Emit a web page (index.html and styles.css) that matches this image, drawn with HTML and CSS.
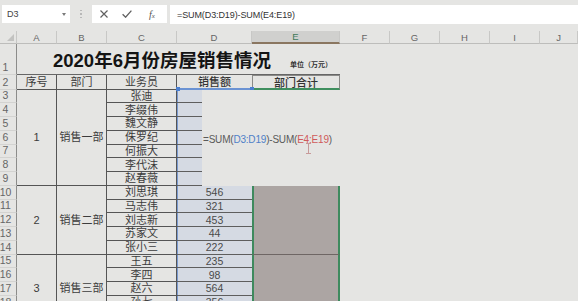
FILE: index.html
```html
<!DOCTYPE html>
<html lang="zh">
<head>
<meta charset="utf-8">
<title>2020年6月份房屋销售情况</title>
<link rel="stylesheet" href="styles.css">
</head>
<body>
<div class="topbar">
  <div class="namebox"><span>D3</span><span class="nb-arrow"></span></div>
  <div class="grip"><i></i><i></i><i></i></div>
  <div class="fxbox">
    <svg class="ic-x" width="8" height="8" viewBox="0 0 8 8"><path d="M0.5 0.5 L7.5 7.5 M7.5 0.5 L0.5 7.5" stroke="#606060" stroke-width="1.2" fill="none"/></svg>
    <svg class="ic-ok" width="10" height="8" viewBox="0 0 10 8"><path d="M0.6 4.2 L3.6 7.2 L9.4 0.6" stroke="#606060" stroke-width="1.3" fill="none"/></svg>
    <span class="fx">f<span class="fx-x">x</span></span>
  </div>
  <div class="formula">=SUM(D3:D19)-SUM(E4:E19)</div>
</div>

<div class="sheet">
  <div class="corner"><svg width="7" height="7" viewBox="0 0 7 7"><polygon points="7,0 7,7 0,7" fill="#c2c2c0"/></svg></div>
  <div class="ch">A</div><div class="ch">B</div><div class="ch">C</div><div class="ch">D</div><div class="ch sel">E</div>
  <div class="ch">F</div><div class="ch">G</div><div class="ch">H</div><div class="ch">I</div><div class="ch">J</div>

  <div class="rn">1</div>
  <div class="title"><span class="title-text">2020年6月份房屋销售情况</span><span class="unit">单位（万元）</span></div>

  <div class="rn">2</div>
  <div class="c">序号</div><div class="c">部门</div><div class="c">业务员</div>
  <div class="d-hdr">销售额</div><div class="e-hdr">部门合计</div>

  <div class="rn">3</div>
  <div class="c m7">1</div><div class="c m7">销售一部</div><div class="c">张迪</div><div class="d"></div>
  <div class="e-edit">
    <div class="editor"><span>=SUM(</span><span class="ref-d">D3:D19</span><span>)-SUM(</span><span class="ref-e">E4:E19</span><span>)</span>
      <svg class="ibeam" width="5" height="11" viewBox="0 0 5 11"><path d="M0 0.5 H5 M2.5 0.5 V10.5 M0 10.5 H5" stroke="#c79a9a" stroke-width="1" fill="none"/></svg>
    </div>
  </div>
  <div class="rn">4</div><div class="c">李缀伟</div><div class="d"></div>
  <div class="rn">5</div><div class="c">魏文静</div><div class="d"></div>
  <div class="rn">6</div><div class="c">侏罗纪</div><div class="d"></div>
  <div class="rn">7</div><div class="c">何振大</div><div class="d"></div>
  <div class="rn">8</div><div class="c">李代沫</div><div class="d"></div>
  <div class="rn">9</div><div class="c">赵春薇</div><div class="d"></div>

  <div class="rn">10</div>
  <div class="c m5">2</div><div class="c m5">销售二部</div><div class="c">刘思琪</div><div class="d">546</div>
  <div class="e-blk m5"></div>
  <div class="rn">11</div><div class="c">马志伟</div><div class="d">321</div>
  <div class="rn">12</div><div class="c">刘志新</div><div class="d">453</div>
  <div class="rn">13</div><div class="c">苏家文</div><div class="d">44</div>
  <div class="rn">14</div><div class="c">张小三</div><div class="d">222</div>

  <div class="rn">15</div>
  <div class="c m5">3</div><div class="c m5">销售三部</div><div class="c">王五</div><div class="d">235</div>
  <div class="e-blk m5"></div>
  <div class="rn">16</div><div class="c">李四</div><div class="d">98</div>
  <div class="rn">17</div><div class="c">赵六</div><div class="d">564</div>
  <div class="rn">18</div><div class="c">孙七</div><div class="d">356</div>
</div>
</body>
</html>
```

FILE: styles.css
```css
* { box-sizing: border-box; }
html, body { margin: 0; padding: 0; }
body {
  width: 578px;
  height: 301px;
  overflow: hidden;
  background: #e5e5e3;
  font-family: "Liberation Sans", "Noto Sans CJK SC", sans-serif;
  color: #3a3a3a;
}

/* ---------- formula bar ---------- */
.topbar {
  height: 31px;
  display: flex;
  align-items: flex-start;
  padding-top: 5px;
}
.namebox {
  margin-left: 2px;
  width: 68px;
  height: 18px;
  background: #fff;
  display: flex;
  align-items: center;
  padding-left: 5px;
  font-size: 9px;
  color: #444;
}
.nb-arrow {
  margin-left: auto;
  margin-right: 4px;
  border-left: 2.5px solid transparent;
  border-right: 2.5px solid transparent;
  border-top: 3px solid #7a7a7a;
}
.grip {
  margin-left: 10px;
  width: 2px;
  height: 18px;
  display: flex;
  flex-direction: column;
  justify-content: center;
  gap: 2px;
}
.grip i {
  display: block;
  width: 1.5px;
  height: 1.5px;
  background: #b8b8b8;
}
.fxbox {
  margin-left: 10px;
  width: 75px;
  height: 18px;
  background: #fff;
  display: flex;
  align-items: center;
  padding-left: 8px;
}
.ic-ok { margin-left: 14px; }
.fx {
  margin-left: 17px;
  font-family: "Liberation Serif", serif;
  font-style: italic;
  font-size: 10px;
  color: #555;
}
.fx-x { font-size: 7px; }
.formula {
  margin-left: 3px;
  flex: 1;
  height: 19px;
  background: #fff;
  display: flex;
  align-items: center;
  padding-left: 7px;
  font-size: 9px;
  letter-spacing: -0.1px;
  color: #333;
}

/* ---------- sheet ---------- */
.sheet {
  display: grid;
  grid-template-columns: 17px 40px 50px 70px 75px 88px 50px 50px 50px 50px 38px;
  grid-template-rows: 13px 31px 14.5px;
  grid-auto-rows: 13.75px;
}
.corner {
  border-right: 1px solid #c8c8c6;
  border-bottom: 1px solid #bdbdbb;
  display: flex;
  align-items: flex-end;
  justify-content: flex-end;
  padding: 0 2px 2px 0;
}
.ch {
  border-right: 1px solid #c8c8c6;
  border-bottom: 1px solid #bdbdbb;
  display: flex;
  align-items: center;
  justify-content: center;
  font-size: 9.5px;
  color: #666;
}
.ch.sel {
  background: #d0d0ce;
  border-bottom: 2px solid #8a7660;
  color: #3f7a5a;
}
.rn {
  grid-column: 1;
  border-right: 1px solid #8c8c8a;
  border-bottom: 1px solid #d3d3d1;
  display: flex;
  align-items: flex-end;
  justify-content: center;
  padding-right: 5px;
  font-size: 10.5px;
  line-height: 13px;
  color: #666;
}

.title {
  grid-column: span 5;
  border-bottom: 1px solid #666;
  display: flex;
  align-items: baseline;
  padding: 6px 8px 0 36px;
}
.title-text {
  font-size: 18.5px;
  font-weight: bold;
  color: #141414;
  line-height: 22px;
}
.unit {
  margin-left: auto;
  font-size: 7px;
  font-weight: bold;
  color: #333;
}

.c {
  border-right: 1px solid #555;
  border-bottom: 1px solid #555;
  display: flex;
  align-items: center;
  justify-content: center;
  font-size: 11px;
  line-height: 12px;
  color: #3c3c3c;
}
.m7 { grid-row: span 7; }
.m5 { grid-row: span 5; }

.d {
  background: #d5dae3;
  border-bottom: 1px solid #5e5e5e;
  box-shadow: inset 1px 0 0 #7a9ad0;
  display: flex;
  align-items: center;
  justify-content: center;
  font-size: 10.5px;
  color: #4a4a4a;
}
.d-hdr {
  position: relative;
  border-bottom: 2px solid #6b93d3;
  display: flex;
  align-items: center;
  justify-content: center;
  font-size: 11px;
  font-weight: 500;
  color: #333;
}
.d-hdr::before,
.d-hdr::after {
  content: "";
  position: absolute;
  bottom: -3px;
  width: 4px;
  height: 4px;
  background: #4a7fd0;
}
.d-hdr::before { left: -1px; }
.d-hdr::after { right: -2px; }
.e-hdr {
  border: 1px solid #8a8a88;
  border-bottom: 2px solid #3f8f5f;
  display: flex;
  align-items: center;
  justify-content: center;
  font-size: 11px;
  font-weight: 500;
  color: #333;
}

.e-edit {
  grid-row: span 7;
  position: relative;
}
.editor {
  position: absolute;
  top: 0;
  bottom: 0;
  left: -50px;
  width: 138px;
  z-index: 2;
  background: #e5e5e3;
  display: flex;
  align-items: center;
  padding: 3px 0 0 1px;
  font-size: 10px;
  letter-spacing: -0.2px;
  color: #5a5a5a;
  white-space: nowrap;
}
.ref-d { color: #4f80c8; }
.ref-e { color: #d05a5a; }
.ibeam {
  position: absolute;
  left: 104px;
  top: 53px;
}

.e-blk {
  background: #aca5a3;
  border-left: 2px solid #3e8a5e;
  border-right: 2px solid #3e8a5e;
  border-bottom: 1px solid #6e6664;
}
```
